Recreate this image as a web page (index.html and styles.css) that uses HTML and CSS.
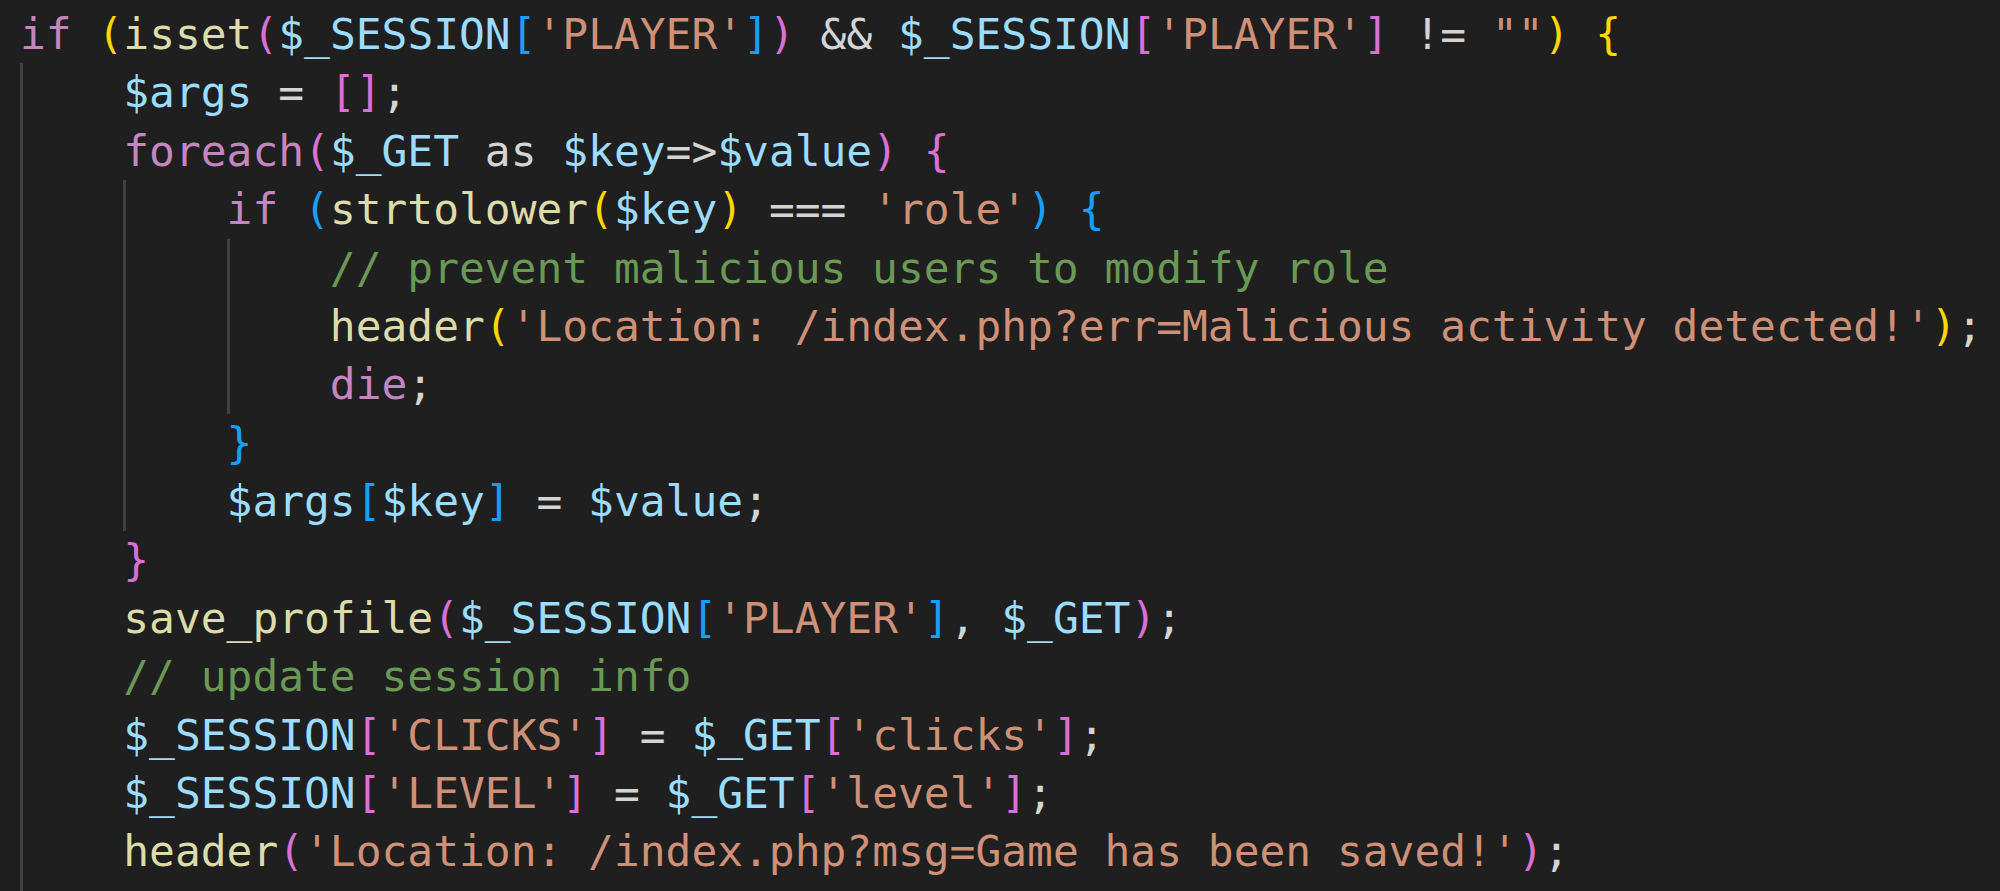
FILE: index.html
```html
<!DOCTYPE html>
<html>
<head>
<meta charset="utf-8">
<link rel="stylesheet" href="styles.css">
</head>
<body>
<div class="editor">
<div class="line"><span class="k">if</span> <span class="b1">(</span><span class="f">isset</span><span class="b2">(</span><span class="v">$_SESSION</span><span class="b3">[</span><span class="s">'PLAYER'</span><span class="b3">]</span><span class="b2">)</span> &amp;&amp; <span class="v">$_SESSION</span><span class="b2">[</span><span class="s">'PLAYER'</span><span class="b2">]</span> != <span class="s">""</span><span class="b1">)</span> <span class="b1">{</span></div>
<div class="line"><span class="ind"></span><span class="v">$args</span> = <span class="b2">[]</span>;</div>
<div class="line"><span class="ind"></span><span class="k">foreach</span><span class="b2">(</span><span class="v">$_GET</span> as <span class="v">$key</span>=&gt;<span class="v">$value</span><span class="b2">)</span> <span class="b2">{</span></div>
<div class="line"><span class="ind"></span><span class="ind"></span><span class="k">if</span> <span class="b3">(</span><span class="f">strtolower</span><span class="b1">(</span><span class="v">$key</span><span class="b1">)</span> === <span class="s">'role'</span><span class="b3">)</span> <span class="b3">{</span></div>
<div class="line"><span class="ind"></span><span class="ind"></span><span class="ind"></span><span class="c">// prevent malicious users to modify role</span></div>
<div class="line"><span class="ind"></span><span class="ind"></span><span class="ind"></span><span class="f">header</span><span class="b1">(</span><span class="s">'Location: /index.php?err=Malicious activity detected!'</span><span class="b1">)</span>;</div>
<div class="line"><span class="ind"></span><span class="ind"></span><span class="ind"></span><span class="k">die</span>;</div>
<div class="line"><span class="ind"></span><span class="ind"></span><span class="b3">}</span></div>
<div class="line"><span class="ind"></span><span class="ind"></span><span class="v">$args</span><span class="b3">[</span><span class="v">$key</span><span class="b3">]</span> = <span class="v">$value</span>;</div>
<div class="line"><span class="ind"></span><span class="b2">}</span></div>
<div class="line"><span class="ind"></span><span class="f">save_profile</span><span class="b2">(</span><span class="v">$_SESSION</span><span class="b3">[</span><span class="s">'PLAYER'</span><span class="b3">]</span>, <span class="v">$_GET</span><span class="b2">)</span>;</div>
<div class="line"><span class="ind"></span><span class="c">// update session info</span></div>
<div class="line"><span class="ind"></span><span class="v">$_SESSION</span><span class="b2">[</span><span class="s">'CLICKS'</span><span class="b2">]</span> = <span class="v">$_GET</span><span class="b2">[</span><span class="s">'clicks'</span><span class="b2">]</span>;</div>
<div class="line"><span class="ind"></span><span class="v">$_SESSION</span><span class="b2">[</span><span class="s">'LEVEL'</span><span class="b2">]</span> = <span class="v">$_GET</span><span class="b2">[</span><span class="s">'level'</span><span class="b2">]</span>;</div>
<div class="line"><span class="ind"></span><span class="f">header</span><span class="b2">(</span><span class="s">'Location: /index.php?msg=Game has been saved!'</span><span class="b2">)</span>;</div>
<div class="line line-tail"><span class="ind"></span></div>
</div>
</body>
</html>
```
FILE: styles.css
```css
html, body {
  margin: 0;
  padding: 0;
  background: #1f1f1f;
  height: 891px;
  overflow: hidden;
}

.editor {
  box-sizing: border-box;
  height: 891px;
  overflow: hidden;
  padding: 5px 0 0 20px;
  font-family: "DejaVu Sans Mono", monospace;
  font-size: 42.9px;
  color: #d4d4d4;
}

.line {
  height: 58.4px;
  line-height: 58.4px;
  white-space: pre;
}

.line-tail {
  height: 10px;
}

.ind {
  display: inline-block;
  width: 4ch;
  height: 58.4px;
  vertical-align: top;
  background: linear-gradient(#404040, #404040) no-repeat 0 0 / 3px 100%;
}

.line-tail .ind {
  height: 10px;
}

.k { color: #c586c0; }
.f { color: #dcdcaa; }
.v { color: #9cdcfe; }
.s { color: #ce9178; }
.c { color: #6a9955; }
.b1 { color: #ffd700; }
.b2 { color: #da70d6; }
.b3 { color: #179fff; }
```
